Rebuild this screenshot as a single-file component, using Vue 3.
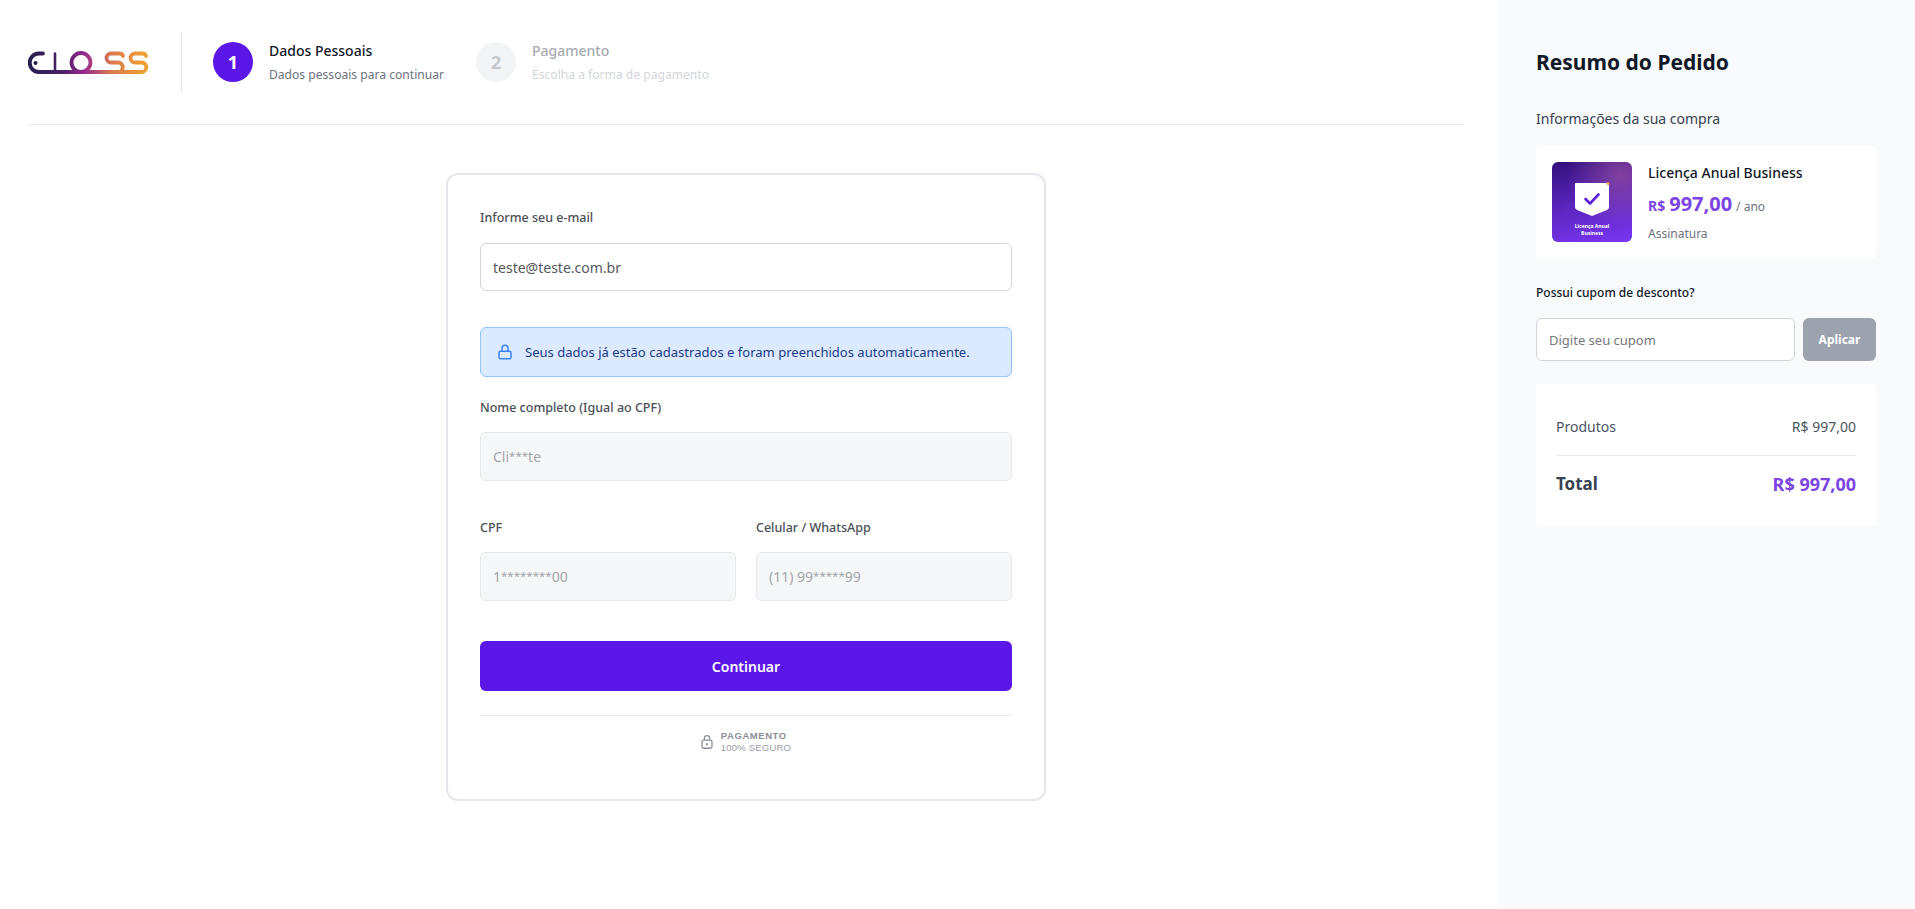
<template>
  <div class="checkout">
    <main class="main">
      <!-- topo com logo e etapas -->
      <header class="top">
        <svg class="logo" width="122" height="26" viewBox="0 0 122 26" fill="none">
          <defs>
            <linearGradient id="logoGrad" gradientUnits="userSpaceOnUse" x1="0" y1="0" x2="122" y2="0">
              <stop offset="0" stop-color="#241f4d" />
              <stop offset="0.28" stop-color="#4a2168" />
              <stop offset="0.46" stop-color="#96298f" />
              <stop offset="0.68" stop-color="#d9794f" />
              <stop offset="1" stop-color="#f2a62d" />
            </linearGradient>
          </defs>
          <g stroke="url(#logoGrad)" stroke-width="3.8" stroke-linecap="round" stroke-linejoin="round">
            <path d="M15 3.5 H11 A9.25 9.25 0 0 0 11 22 H90" />
            <path d="M27 3.5 V22" stroke-width="2.6" />
            <circle cx="53" cy="12.5" r="9.5" />
            <path d="M95 6 Q94.5 3.5 91 3.5 H83 A4.5 4.5 0 0 0 83 12.5 H90 A4.75 4.75 0 0 1 90 22 H80" />
            <path d="M118 6 Q117.5 3.5 114 3.5 H107 A4.5 4.5 0 0 0 107 12.5 H113.5 A4.75 4.75 0 0 1 113.5 22 H90" />
          </g>
          <circle cx="7.5" cy="13" r="2" fill="#241f4d" />
        </svg>

        <div class="top-sep"></div>

        <div class="steps">
          <div v-for="step in steps" :key="step.num" class="step" :class="{ active: step.active }">
            <span class="step-num">{{ step.num }}</span>
            <div class="step-text">
              <div class="step-title">{{ step.title }}</div>
              <div class="step-desc">{{ step.desc }}</div>
            </div>
          </div>
        </div>
      </header>

      <section class="form-card">
        <label class="lbl">Informe seu e-mail</label>
        <input class="inp" type="text" value="teste@teste.com.br" />

        <div class="alert">
          <svg width="18" height="18" viewBox="0 0 24 24" fill="none" stroke="#3b82f6" stroke-width="2" stroke-linecap="round" stroke-linejoin="round">
            <rect x="4" y="11" width="16" height="10" rx="2" />
            <path d="M8 11V7a4 4 0 0 1 8 0v4" />
          </svg>
          <span>Seus dados já estão cadastrados e foram preenchidos automaticamente.</span>
        </div>

        <label class="lbl lbl-nome">Nome completo (Igual ao CPF)</label>
        <div class="inp off">Cli<span class="mask">***</span>te</div>

        <div class="two-cols">
          <div>
            <label class="lbl">CPF</label>
            <div class="inp off">1<span class="mask">********</span>00</div>
          </div>
          <div>
            <label class="lbl">Celular / WhatsApp</label>
            <div class="inp off">(11) 99<span class="mask">*****</span>99</div>
          </div>
        </div>

        <button class="btn-continue" type="button">Continuar</button>

        <div class="secure">
          <svg width="12" height="16" viewBox="0 0 14 17" fill="none" stroke="#8b8f97" stroke-width="1.5">
            <rect x="1.2" y="6.2" width="11.6" height="9.6" rx="2" />
            <path d="M4 6V4a3 3 0 0 1 6 0v2" />
            <circle cx="7" cy="11" r="0.6" fill="#8b8f97" />
          </svg>
          <div class="secure-text">
            <strong>PAGAMENTO</strong>
            <span>100% SEGURO</span>
          </div>
        </div>
      </section>
    </main>

    <aside class="side">
      <h2 class="side-title">Resumo do Pedido</h2>
      <p class="side-sub">Informações da sua compra</p>

      <div class="product">
        <div class="thumb">
          <svg width="36" height="35" viewBox="0 0 36 35">
            <path d="M1 2 Q1 1 2 1 H34 Q35 1 35 2 V25 Q35 27 33 28 L18 34 L3 28 Q1 27 1 25 Z" fill="#fff" />
            <path d="M11.5 17 L16 21.5 L24.5 12.5" fill="none" stroke="#5b21d6" stroke-width="2.6" stroke-linecap="round" stroke-linejoin="round" />
            <circle cx="34" cy="1.5" r="1.5" fill="#f0a04b" />
          </svg>
          <div class="thumb-label">Licença Anual<br />Business</div>
        </div>
        <div class="product-info">
          <div class="product-name">Licença Anual Business</div>
          <div class="product-price">
            <span class="cur">R$</span>
            <span class="val">997,00</span>
            <span class="per">/ ano</span>
          </div>
          <div class="product-type">Assinatura</div>
        </div>
      </div>

      <div class="coupon-title">Possui cupom de desconto?</div>
      <div class="coupon">
        <input class="coupon-inp" type="text" placeholder="Digite seu cupom" />
        <button class="coupon-btn" type="button">Aplicar</button>
      </div>

      <div class="totals">
        <div class="row">
          <span>Produtos</span>
          <span>R$ 997,00</span>
        </div>
        <div class="row row-total">
          <span>Total</span>
          <span class="total-val">R$ 997,00</span>
        </div>
      </div>
    </aside>
  </div>
</template>

<script setup>
const steps = [
  { num: 1, title: 'Dados Pessoais', desc: 'Dados pessoais para continuar', active: true },
  { num: 2, title: 'Pagamento', desc: 'Escolha a forma de pagamento', active: false }
]
</script>

<style>
body {
  margin: 0;
  background: #fff;
}
</style>

<style scoped>
.checkout {
  display: flex;
  min-height: 100vh;
  font-family: 'Noto Sans', 'Liberation Sans', sans-serif;
  color: #111827;
  box-sizing: border-box;
}

.main {
  flex: 1;
  min-width: 0;
  padding: 0 33px 0 28px;
}

.top {
  display: flex;
  align-items: center;
  padding: 32px 0;
  border-bottom: 1px solid #e5e7eb;
}

.logo {
  flex-shrink: 0;
  margin-top: 2px;
}

.top-sep {
  width: 1px;
  height: 60px;
  background: #e5e7eb;
  margin: 0 31px;
}

.steps {
  display: flex;
  gap: 32px;
}

.step {
  display: flex;
  align-items: center;
  gap: 16px;
}

.step-num {
  width: 40px;
  height: 40px;
  border-radius: 50%;
  display: flex;
  align-items: center;
  justify-content: center;
  background: #f3f4f6;
  color: #c4c8cf;
  font-size: 18px;
  font-weight: 700;
}

.step-text {
  padding-top: 2px;
}

.step-title {
  font-size: 14px;
  line-height: 20px;
  font-weight: 500;
  color: #a8abb1;
  margin-bottom: 4px;
}

.step-desc {
  font-size: 12.1px;
  line-height: 20px;
  color: #d1d5db;
}

.step.active .step-num {
  background: #5b16e8;
  color: #fff;
}

.step.active .step-title {
  color: #111827;
}

.step.active .step-desc {
  color: #6b7280;
}

.form-card {
  width: 600px;
  box-sizing: border-box;
  margin: 48px auto 0;
  padding: 32px 32px 46px;
  border: 2px solid #e5e7eb;
  border-radius: 12px;
  background: #fff;
}

.lbl {
  display: block;
  padding-top: 1px;
  font-size: 12.5px;
  line-height: 20px;
  font-weight: 500;
  color: #4b4f56;
  margin-bottom: 15px;
}

.inp {
  display: block;
  width: 100%;
  height: 48px;
  box-sizing: border-box;
  padding: 0 12px;
  border: 1px solid #d1d5db;
  border-radius: 6px;
  background: #fff;
  font-family: inherit;
  font-size: 14px;
  color: #55585e;
  outline: none;
}

.inp.off {
  display: flex;
  align-items: center;
  height: 49px;
  background: #f6f7f9;
  border-color: #e5e7eb;
  color: #a3a5a9;
}

.mask {
  font-size: 11.5px;
  position: relative;
  top: -1px;
}

.alert {
  display: flex;
  align-items: center;
  gap: 11px;
  height: 50px;
  box-sizing: border-box;
  margin-top: 36px;
  padding: 0 15px;
  border: 1px solid #93c5fd;
  border-radius: 6px;
  background: #dbeafe;
  font-size: 13.05px;
  color: #1e3a8a;
}

.lbl-nome {
  margin-top: 20px;
  margin-bottom: 14px;
}

.two-cols {
  display: grid;
  grid-template-columns: 1fr 1fr;
  gap: 20px;
  margin-top: 36px;
}

.two-cols .lbl {
  margin-bottom: 14px;
}

.btn-continue {
  display: block;
  width: 100%;
  height: 50px;
  margin-top: 40px;
  border: 0;
  border-radius: 6px;
  background: #5b16e8;
  color: #fff;
  font-family: inherit;
  font-size: 14px;
  font-weight: 600;
}

.secure {
  display: flex;
  justify-content: center;
  align-items: center;
  gap: 8px;
  margin-top: 24px;
  padding-top: 14px;
  border-top: 1px solid #e5e7eb;
}

.secure-text {
  display: flex;
  flex-direction: column;
  font-family: 'Liberation Sans', Arial, sans-serif;
  font-size: 9.5px;
  line-height: 11.5px;
  color: #9a9ca1;
}

.secure-text strong {
  color: #8b8f97;
  font-weight: 700;
  letter-spacing: 0.55px;
}

.secure-text span {
  letter-spacing: 0.2px;
}

.side {
  width: 418px;
  flex-shrink: 0;
  box-sizing: border-box;
  padding: 48px 39px 0;
  background: #f9fafb;
}

.side-title {
  margin: 0;
  font-size: 21px;
  line-height: 28px;
  font-weight: 700;
  color: #111827;
}

.side-sub {
  margin: 33px 0 0;
  font-size: 14px;
  line-height: 20px;
  color: #374151;
}

.product {
  display: flex;
  align-items: center;
  gap: 16px;
  height: 112px;
  box-sizing: border-box;
  margin-top: 17px;
  padding: 0 16px;
  background: #fff;
  border-radius: 4px;
}

.thumb {
  width: 80px;
  height: 80px;
  flex-shrink: 0;
  box-sizing: border-box;
  padding-top: 20px;
  border-radius: 6px;
  display: flex;
  flex-direction: column;
  align-items: center;
  background: radial-gradient(circle at 85% 15%, rgba(176, 96, 160, 0.55), rgba(176, 96, 160, 0) 55%),
    linear-gradient(170deg, #32107c 0%, #5a25bd 50%, #7a36f2 100%);
}

.thumb-label {
  margin-top: 6px;
  font-size: 5px;
  line-height: 6.5px;
  font-weight: 700;
  color: #fff;
  text-align: center;
}

.product-info {
  padding-top: 2px;
}

.product-name {
  font-size: 14px;
  line-height: 20px;
  font-weight: 500;
  color: #111827;
}

.product-price {
  display: flex;
  align-items: baseline;
  gap: 4px;
  margin-top: 8px;
  line-height: 26px;
}

.cur {
  font-size: 14px;
  font-weight: 700;
  color: #7b45e3;
}

.val {
  font-size: 20px;
  font-weight: 700;
  color: #7b45e3;
}

.per {
  font-size: 12px;
  color: #6b7280;
}

.product-type {
  margin-top: 4px;
  font-size: 12px;
  line-height: 20px;
  color: #6b7280;
}

.coupon-title {
  margin-top: 25px;
  font-size: 12px;
  line-height: 20px;
  font-weight: 500;
  color: #111827;
}

.coupon {
  display: flex;
  gap: 8px;
  margin-top: 15px;
}

.coupon-inp {
  flex: 1;
  min-width: 0;
  height: 43px;
  box-sizing: border-box;
  padding: 0 12px;
  border: 1px solid #d1d5db;
  border-radius: 6px;
  background: #fff;
  font-family: inherit;
  font-size: 13px;
  outline: none;
}

.coupon-inp::placeholder {
  color: #75787e;
}

.coupon-btn {
  width: 73px;
  height: 43px;
  border: 0;
  border-radius: 6px;
  background: #9ca3af;
  color: #fff;
  font-family: inherit;
  font-size: 12px;
  font-weight: 700;
}

.totals {
  margin-top: 23px;
  padding: 33px 20px 29px;
  background: #fff;
  border-radius: 4px;
}

.row {
  display: flex;
  justify-content: space-between;
  font-size: 14px;
  line-height: 20px;
  color: #4b5563;
  padding-bottom: 18px;
  border-bottom: 1px solid #e5e7eb;
}

.row-total {
  margin-top: 14px;
  padding-bottom: 0;
  border-bottom: 0;
  font-size: 17px;
  line-height: 28px;
  font-weight: 700;
  color: #374151;
}

.total-val {
  font-size: 18px;
  color: #7b45e3;
}
</style>
